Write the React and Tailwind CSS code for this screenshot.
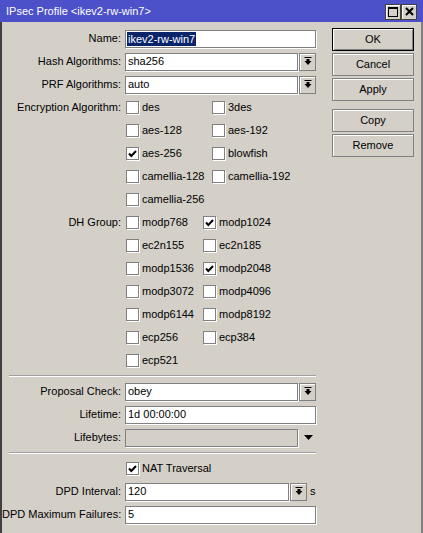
import React from "react";

const FONT = { fontFamily: '"Liberation Sans", Arial, sans-serif' };

function Check({ checked }) {
  return (
    <span className="w-[13px] h-[13px] shrink-0 bg-white border border-[#808080] shadow-[1px_1px_0_#ffffff] flex items-center justify-center">
      {checked && (
        <svg width="9" height="8" viewBox="0 0 9 8">
          <path d="M1 3.5 L3.3 6 L8 1" stroke="#000" strokeWidth="2" fill="none" />
        </svg>
      )}
    </span>
  );
}

function CheckItem({ label, checked, w }) {
  return (
    <div className={`flex items-center ${w}`}>
      <Check checked={checked} />
      <span className="ml-[3px] text-[11px] text-black">{label}</span>
    </div>
  );
}

function DropIcon() {
  return (
    <svg width="8" height="9" viewBox="0 0 8 9">
      <rect x="0.5" y="0" width="7" height="1" fill="#000" />
      <rect x="2.5" y="2" width="3" height="2" fill="#000" />
      <path d="M0.5 4 H7.5 L4 8 Z" fill="#000" />
    </svg>
  );
}

function DropBtn() {
  return (
    <div className="ml-[1px] w-[17px] h-[18px] bg-[#d4d0c8] border border-[#808080] shadow-[inset_1px_1px_0_#ffffff] flex items-center justify-center">
      <DropIcon />
    </div>
  );
}

function Input({ w, value, selected, disabled }) {
  return (
    <div
      className={`${w} h-[18px] border border-[#808080] shadow-[1px_1px_0_#ffffff] flex items-center pl-[1px] text-[11px] text-black ${
        disabled ? "bg-[#d4d0c8]" : "bg-white"
      }`}
    >
      {selected ? (
        <span className="bg-[#0a246a] text-white px-[1px] leading-[14px]">{value}</span>
      ) : (
        <span className="px-[1px]">{value}</span>
      )}
    </div>
  );
}

function Row({ label, children }) {
  return (
    <div className="flex items-center h-[23px]">
      <div className="w-[119px] text-right text-[11px] text-black whitespace-nowrap">{label}</div>
      <div className="ml-[4px] flex items-center">{children}</div>
    </div>
  );
}

function Sep() {
  return (
    <div className="h-[8px] pt-[3px] pl-[7px]">
      <div className="h-[2px] border-t border-[#a0a0a0] border-b border-b-white" />
    </div>
  );
}

function Btn({ label, def }) {
  return (
    <div
      className={`w-[82px] h-[23px] flex items-center justify-center text-[11px] text-black bg-[#d4d0c8] ${
        def
          ? "border border-black shadow-[inset_1px_1px_0_#ffffff,inset_-1px_-1px_0_#808080]"
          : "border border-[#808080] shadow-[inset_1px_1px_0_#ffffff]"
      }`}
    >
      {label}
    </div>
  );
}

export default function App() {
  return (
    <div className="w-[423px] h-[533px] bg-[#d4d0c8] flex flex-col overflow-hidden" style={FONT}>
      <div className="h-[22px] bg-[#4c50c9] flex items-center pl-[6px] pr-[4px] shrink-0">
        <span className="text-white text-[11px] flex-1">IPsec Profile &lt;ikev2-rw-win7&gt;</span>
        <div className="flex mt-[1px] mr-[2px]">
          <div className="w-[16px] h-[16px] bg-[#d4d0c8] border border-[#404040] shadow-[inset_1px_1px_0_#ffffff] flex items-center justify-center">
            <svg width="10" height="10" viewBox="0 0 10 10">
              <rect x="0.5" y="0.5" width="9" height="9" fill="none" stroke="#000" />
              <rect x="0" y="0" width="10" height="2" fill="#000" />
            </svg>
          </div>
          <div className="w-[16px] h-[16px] bg-[#d4d0c8] border border-[#404040] shadow-[inset_1px_1px_0_#ffffff] flex items-center justify-center">
            <svg width="9" height="9" viewBox="0 0 9 9">
              <path d="M1 1 L8 8 M8 1 L1 8" stroke="#000" strokeWidth="2" />
            </svg>
          </div>
        </div>
      </div>
      <div className="flex-1 flex border-l-2 border-l-[#404040] border-r-2 border-r-[#808080]">
        <div className="w-[314px] pt-[5px]">
          <Row label="Name:">
            <Input w="w-[191px]" value="ikev2-rw-win7" selected />
          </Row>
          <Row label="Hash Algorithms:">
            <Input w="w-[173px]" value="sha256" />
            <DropBtn />
          </Row>
          <Row label="PRF Algorithms:">
            <Input w="w-[173px]" value="auto" />
            <DropBtn />
          </Row>
          <Row label="Encryption Algorithm:">
            <div className="ml-[1px] flex">
              <CheckItem label="des" w="w-[86px]" />
              <CheckItem label="3des" />
            </div>
          </Row>
          <Row label="">
            <div className="ml-[1px] flex">
              <CheckItem label="aes-128" w="w-[86px]" />
              <CheckItem label="aes-192" />
            </div>
          </Row>
          <Row label="">
            <div className="ml-[1px] flex">
              <CheckItem label="aes-256" checked w="w-[86px]" />
              <CheckItem label="blowfish" />
            </div>
          </Row>
          <Row label="">
            <div className="ml-[1px] flex">
              <CheckItem label="camellia-128" w="w-[86px]" />
              <CheckItem label="camellia-192" />
            </div>
          </Row>
          <Row label="">
            <div className="ml-[1px] flex">
              <CheckItem label="camellia-256" w="w-[86px]" />
            </div>
          </Row>
          <Row label="DH Group:">
            <div className="ml-[1px] flex">
              <CheckItem label="modp768" w="w-[77px]" />
              <CheckItem label="modp1024" checked />
            </div>
          </Row>
          <Row label="">
            <div className="ml-[1px] flex">
              <CheckItem label="ec2n155" w="w-[77px]" />
              <CheckItem label="ec2n185" />
            </div>
          </Row>
          <Row label="">
            <div className="ml-[1px] flex">
              <CheckItem label="modp1536" w="w-[77px]" />
              <CheckItem label="modp2048" checked />
            </div>
          </Row>
          <Row label="">
            <div className="ml-[1px] flex">
              <CheckItem label="modp3072" w="w-[77px]" />
              <CheckItem label="modp4096" />
            </div>
          </Row>
          <Row label="">
            <div className="ml-[1px] flex">
              <CheckItem label="modp6144" w="w-[77px]" />
              <CheckItem label="modp8192" />
            </div>
          </Row>
          <Row label="">
            <div className="ml-[1px] flex">
              <CheckItem label="ecp256" w="w-[77px]" />
              <CheckItem label="ecp384" />
            </div>
          </Row>
          <Row label="">
            <div className="ml-[1px] flex">
              <CheckItem label="ecp521" w="w-[77px]" />
            </div>
          </Row>
          <Sep />
          <Row label="Proposal Check:">
            <Input w="w-[173px]" value="obey" />
            <DropBtn />
          </Row>
          <Row label="Lifetime:">
            <Input w="w-[191px]" value="1d 00:00:00" />
          </Row>
          <Row label="Lifebytes:">
            <Input w="w-[173px]" value="" disabled />
            <div className="ml-[6px] w-[9px] flex justify-center">
              <svg width="9" height="5" viewBox="0 0 9 5">
                <path d="M0 0 H9 L4.5 5 Z" fill="#000" />
              </svg>
            </div>
          </Row>
          <Sep />
          <Row label="">
            <div className="ml-[1px] flex">
              <CheckItem label="NAT Traversal" checked />
            </div>
          </Row>
          <Row label="DPD Interval:">
            <Input w="w-[164px]" value="120" />
            <DropBtn />
            <span className="ml-[3px] text-[11px] text-black">s</span>
          </Row>
          <Row label="DPD Maximum Failures:">
            <Input w="w-[191px]" value="5" />
          </Row>
        </div>
        <div className="ml-[16px] pt-[6px] flex flex-col">
          <Btn label="OK" def />
          <div className="h-[2px]" />
          <Btn label="Cancel" />
          <div className="h-[2px]" />
          <Btn label="Apply" />
          <div className="h-[8px]" />
          <Btn label="Copy" />
          <div className="h-[2px]" />
          <Btn label="Remove" />
        </div>
      </div>
    </div>
  );
}
